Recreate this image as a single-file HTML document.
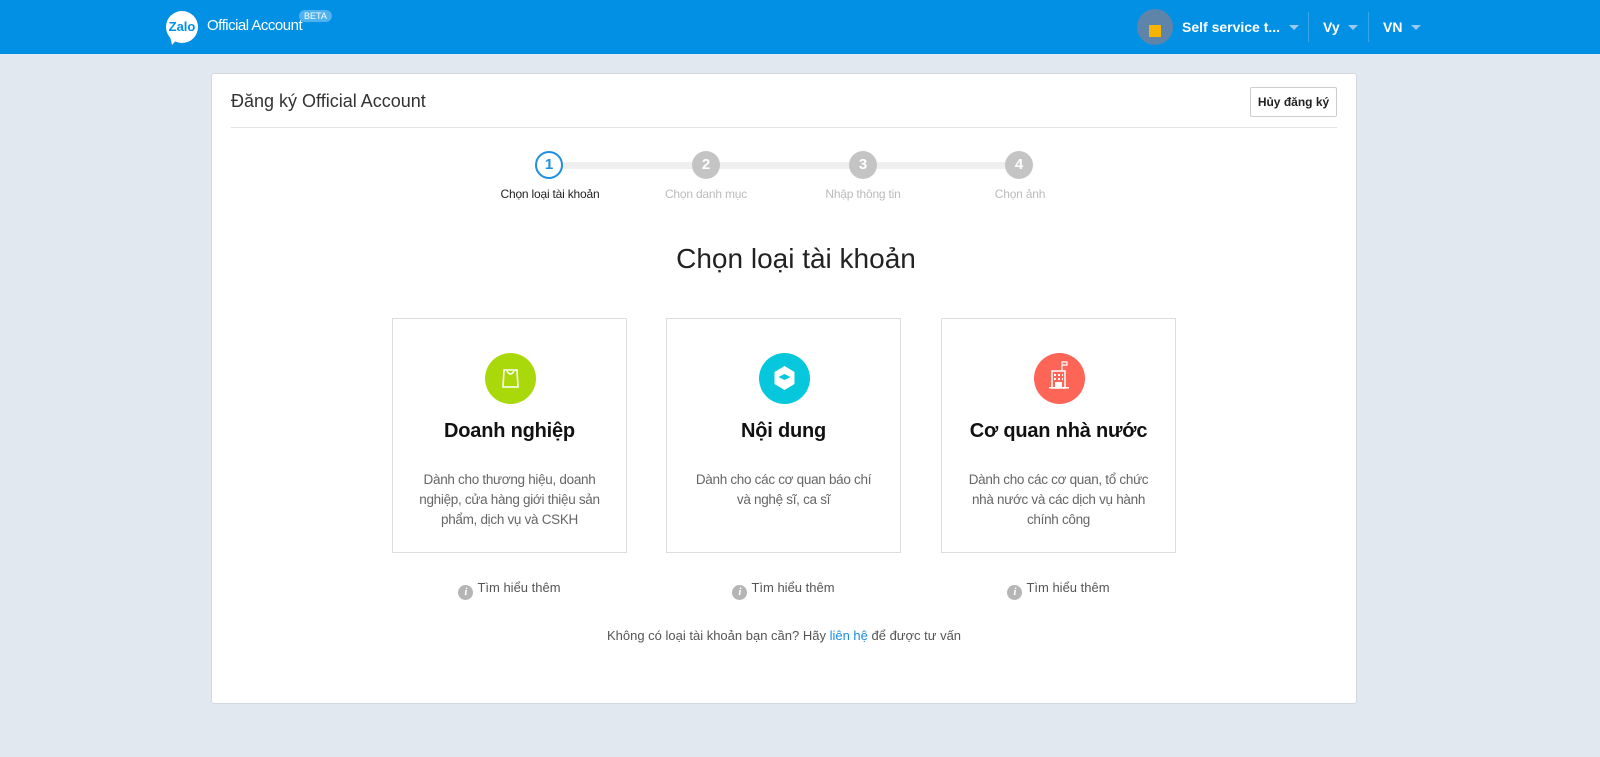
<!DOCTYPE html>
<html><head><meta charset="utf-8"><style>
*{margin:0;padding:0;box-sizing:border-box}
body{width:1600px;height:757px;background:#e1e8ef;font-family:"Liberation Sans",Arial,sans-serif;position:relative;overflow:hidden}
.hdr{position:absolute;left:0;top:0;width:1600px;height:54px;background:#0190e4}
.abs{position:absolute}
.card{position:absolute;left:211px;top:73px;width:1146px;height:631px;background:#fff;border:1px solid #d3d9e0;border-radius:3px}
.step{position:absolute;width:28px;height:28px;border-radius:50%;background:#c4c4c4;color:#fff;font-weight:bold;font-size:15px;text-align:center;line-height:28px;top:151px}
.slab{position:absolute;top:187px;width:160px;text-align:center;font-size:12px;color:#bbb;letter-spacing:-0.2px}
.box{position:absolute;top:318px;width:235px;height:235px;border:1px solid #ddd;text-align:center}
.ic{position:absolute;left:92px;top:34px;width:51px;height:51px;border-radius:50%}
.bt{position:absolute;top:101px;width:100%;font-size:20px;font-weight:bold;color:#111;letter-spacing:-0.2px}
.bd{position:absolute;top:151px;left:22px;right:22px;font-size:13.5px;line-height:20px;color:#666;letter-spacing:-0.3px}
.more{position:absolute;top:580px;font-size:13px;color:#555;width:235px;text-align:center}
.more i{display:inline-block;width:15px;height:15px;border-radius:50%;background:#b5b5b5;color:#fff;font-size:11px;line-height:15px;font-weight:bold;font-family:"Liberation Serif",serif;vertical-align:-3px;margin-right:4px}
</style></head><body>
<div class="hdr">
 <div class="abs" style="left:166px;top:11px;width:32px;height:32px;border-radius:50%;background:#fff;color:#0190e4;font-weight:bold;font-size:13px;line-height:32px;text-align:center">Zalo</div>
 <div class="abs" style="left:170px;top:36px;width:10px;height:9px;background:#fff;clip-path:polygon(0 0,100% 0,20% 100%)"></div>
 <div class="abs" style="left:207px;top:17px;color:#fff;font-size:15px;letter-spacing:-0.5px">Official Account</div>
 <div class="abs" style="left:299px;top:10px;background:#4fb2ef;color:#fff;font-size:9px;padding:1px 5px;border-radius:8px">BETA</div>
 <div class="abs" style="left:1137px;top:9px;width:36px;height:36px;border-radius:50%;background:#5f84aa"><div class="abs" style="left:12px;top:16px;width:12px;height:12px;background:#f5b400"></div></div>
 <div class="abs" style="left:1182px;top:19px;color:#fff;font-weight:bold;font-size:14px">Self service t...</div>
 <div class="abs" style="left:1289px;top:25px;border:5px solid transparent;border-top-color:#9cc9ef"></div>
 <div class="abs" style="left:1308px;top:12px;width:1px;height:30px;background:#3aa6ea"></div>
 <div class="abs" style="left:1323px;top:19px;color:#fff;font-weight:bold;font-size:14px">Vy</div>
 <div class="abs" style="left:1348px;top:25px;border:5px solid transparent;border-top-color:#9cc9ef"></div>
 <div class="abs" style="left:1368px;top:12px;width:1px;height:30px;background:#3aa6ea"></div>
 <div class="abs" style="left:1383px;top:19px;color:#fff;font-weight:bold;font-size:14px">VN</div>
 <div class="abs" style="left:1411px;top:25px;border:5px solid transparent;border-top-color:#9cc9ef"></div>
</div>
<div class="card"></div>
<div class="abs" style="left:231px;top:91px;font-size:18px;color:#333">Đăng ký Official Account</div>
<div class="abs" style="left:1250px;top:87px;width:87px;height:30px;border:1px solid #ccc;border-radius:2px;font-size:12px;font-weight:bold;color:#222;text-align:center;line-height:28px">Hủy đăng ký</div>
<div class="abs" style="left:231px;top:127px;width:1106px;height:1px;background:#e3e3e3"></div>
<div class="abs" style="left:549px;top:162px;width:470px;height:7px;background:#efefef"></div>
<div class="step" style="left:535px;background:#fff;border:2px solid #1f8fe0;color:#1f8fe0;line-height:24px">1</div>
<div class="step" style="left:692px">2</div>
<div class="step" style="left:849px">3</div>
<div class="step" style="left:1005px">4</div>
<div class="slab" style="left:470px;color:#222">Chọn loại tài khoản</div>
<div class="slab" style="left:626px">Chọn danh mục</div>
<div class="slab" style="left:783px">Nhập thông tin</div>
<div class="slab" style="left:940px">Chọn ảnh</div>
<div class="abs" style="left:496px;top:243px;width:600px;text-align:center;font-size:28px;color:#222">Chọn loại tài khoản</div>

<div class="box" style="left:392px"><div class="ic" style="background:#a9d90b">
<svg width="51" height="51" viewBox="0 0 51 51"><path d="M19 17h13l1 17H18z" fill="none" stroke="#fff" stroke-width="1.6"/><path d="M22 18q3.5 6 7 0" fill="none" stroke="#fff" stroke-width="1.6"/></svg></div>
<div class="bt">Doanh nghiệp</div><div class="bd">Dành cho thương hiệu, doanh nghiệp, cửa hàng giới thiệu sản phẩm, dịch vụ và CSKH</div></div>
<div class="box" style="left:666px"><div class="ic" style="background:#06c7dc">
<svg width="51" height="51" viewBox="0 0 51 51"><path d="M25.5 13l10 6v12l-10 6-10-6V19z" fill="#fff"/><path d="M25.5 21l6 3-6 3-6-3z" fill="#06c7dc"/></svg></div>
<div class="bt">Nội dung</div><div class="bd">Dành cho các cơ quan báo chí và nghệ sĩ, ca sĩ</div></div>
<div class="box" style="left:941px"><div class="ic" style="background:#fd6557">
<svg width="51" height="51" viewBox="0 0 51 51"><path d="M18 18h13v17H18z" fill="none" stroke="#fff" stroke-width="1.5"/><path d="M28 18V9h5v3h-5" fill="none" stroke="#fff" stroke-width="1.2"/><path d="M20 21h2v2h-2zM24 21h2v2h-2zM28 21h1v2h-1zM20 25h2v2h-2zM24 25h2v2h-2zM28 25h1v2h-1zM21 29h7v6h-7zM15 34h20v1.5H15z" fill="#fff"/></svg></div>
<div class="bt">Cơ quan nhà nước</div><div class="bd">Dành cho các cơ quan, tổ chức nhà nước và các dịch vụ hành chính công</div></div>

<div class="more" style="left:392px"><i>i</i>Tìm hiểu thêm</div>
<div class="more" style="left:666px"><i>i</i>Tìm hiểu thêm</div>
<div class="more" style="left:941px"><i>i</i>Tìm hiểu thêm</div>
<div class="abs" style="left:484px;top:628px;width:600px;text-align:center;font-size:13px;color:#555">Không có loại tài khoản bạn cần? Hãy <span style="color:#1a8ee0">liên hệ</span> để được tư vấn</div>
</body></html>
